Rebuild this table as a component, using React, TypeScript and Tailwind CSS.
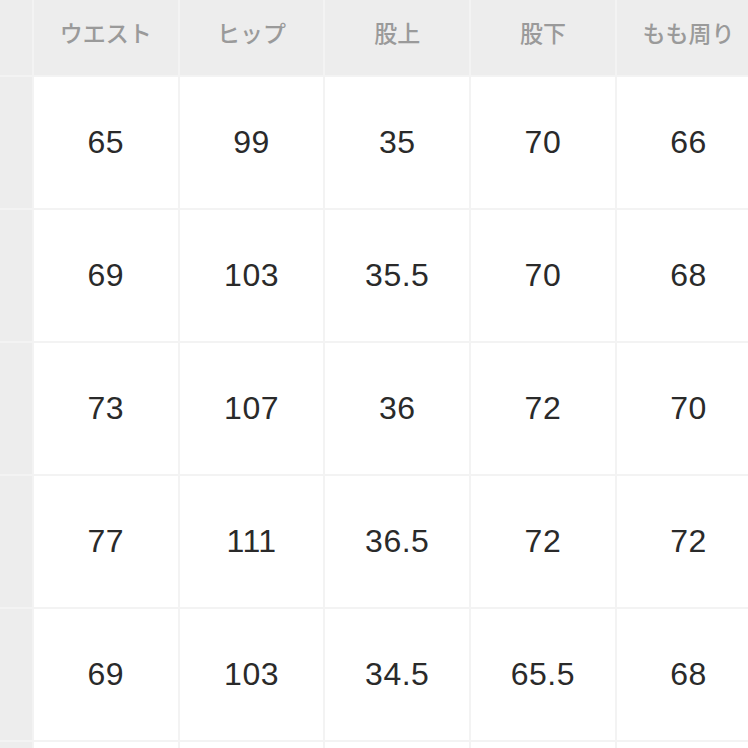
const headers = ["ウエスト", "ヒップ", "股上", "股下", "もも周り"];

const rows: string[][] = [
  ["65", "99", "35", "70", "66"],
  ["69", "103", "35.5", "70", "68"],
  ["73", "107", "36", "72", "70"],
  ["77", "111", "36.5", "72", "72"],
  ["69", "103", "34.5", "65.5", "68"],
  ["", "", "", "", ""],
];

export default function App() {
  return (
    <div className="h-[748px] w-[748px] overflow-hidden bg-[#f3f3f3]">
      <div className="grid grid-cols-[32px_repeat(5,143.7px)] grid-rows-[75px_repeat(6,131px)] gap-[2px] font-['Liberation_Sans','Noto_Sans_CJK_JP',sans-serif]">
        <div className="bg-[#ededed]" />
        {headers.map((h) => (
          <div
            key={h}
            className="flex items-center justify-center whitespace-nowrap bg-[#ededed] pb-[10px] font-['Noto_Sans_CJK_JP',sans-serif] text-[23px] font-medium text-[#9a9a9a]"
          >
            {h}
          </div>
        ))}
        {rows.map((r, i) => (
          <>
            <div key={`l${i}`} className="bg-[#ededed]" />
            {r.map((v, j) => (
              <div
                key={`${i}-${j}`}
                className="flex items-center justify-center bg-white pb-[2px] text-[32px] tracking-[0.5px] text-[#2a2a2a]"
              >
                {v}
              </div>
            ))}
          </>
        ))}
      </div>
    </div>
  );
}
